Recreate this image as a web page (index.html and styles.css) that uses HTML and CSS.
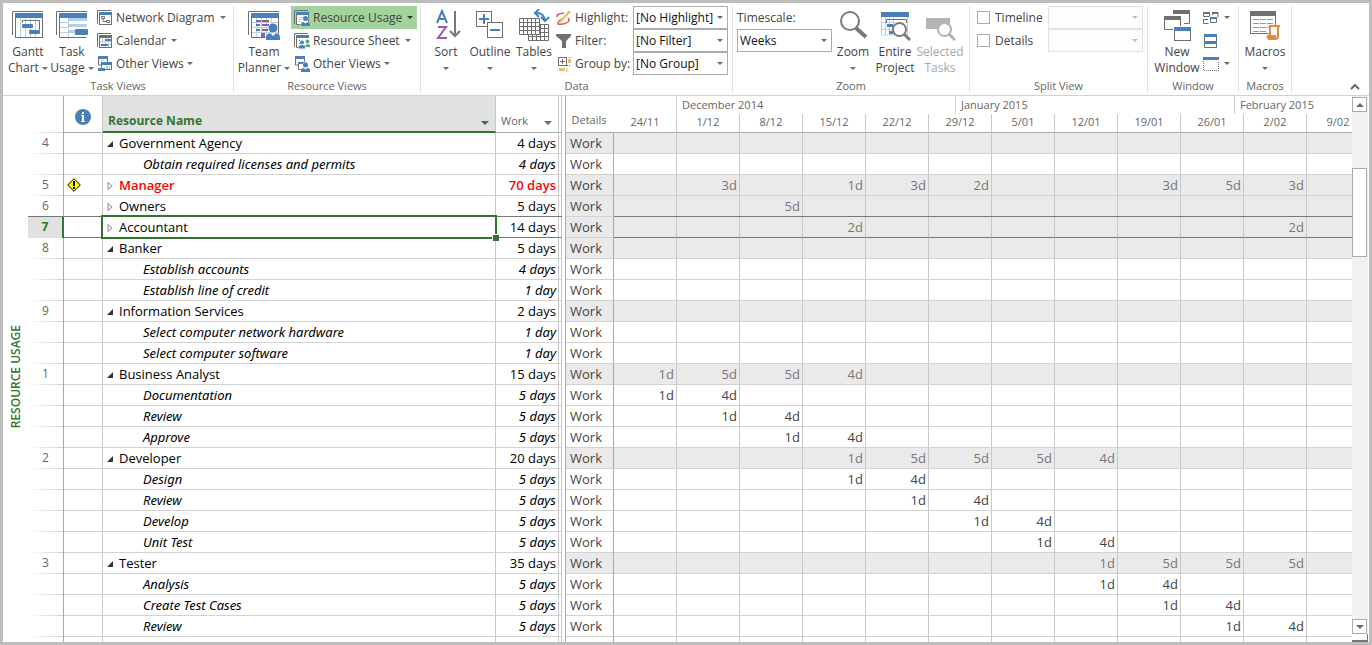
FILE: index.html
```
<!DOCTYPE html>
<html lang="en">
<head>
    <meta charset="UTF-8">
    <meta name="viewport" content="width=device-width, initial-scale=1.0">
    <title>Resource Usage</title>
    <link rel="stylesheet" href="styles.css">
</head>
<body>

<!-- Ribbon -->
<header class="ribbon">
    <section class="group group-task">
        <div class="group-body">
            <button class="big">
                <svg class="icon-lg" viewBox="0 0 32 32">
                    <path class="line" d="M.5 26V2.5H31"/>
                    <path class="grid" d="M8.5 9v19M13.5 9v19M18.5 9v19M23.5 9v19"/>
                    <rect class="line" x="3.5" y="4.5" width="27" height="24"/>
                    <rect class="blue" x="3" y="4" width="28" height="5"/>
                    <path class="line" d="M10.5 14v-2.5h17V21"/>
                    <rect class="blue" x="10" y="15" width="11" height="4" rx="1"/>
                    <rect class="blue" x="17" y="21" width="11" height="4" rx="1"/>
                </svg>
                <span>Gantt</span>
                <span>Chart <i class="arrow"></i></span>
            </button>
            <button class="big">
                <svg class="icon-lg" viewBox="0 0 32 32">
                    <path class="line" d="M.5 26V2.5H31"/>
                    <path class="line" d="M30.5 9V4.5h-27v24h27"/>
                    <rect class="blue" x="3" y="4" width="28" height="5"/>
                    <path class="grid" d="M4 13.5h8M4 18.5h8M4 23.5h8M12.5 9v19"/>
                    <path class="pale" d="M13 9h18v3H13zM13 15h18v3H13zM13 21h6v3h-6z"/>
                    <rect class="blue" x="19" y="20" width="13" height="6" rx="1"/>
                </svg>
                <span>Task</span>
                <span>Usage <i class="arrow"></i></span>
            </button>
            <div class="stack">
                <button class="small">
                    <svg class="icon" viewBox="0 0 16 16">
                        <path class="line" d="M.5 14V.5H14"/>
                        <rect class="line" x="2.5" y="2.5" width="12" height="12"/>
                        <path class="blue" d="M2 2h13v3H2z"/>
                        <path class="line" d="M4.5 6.5h3v2h-3zM9.5 10.5h3v2h-3zM6 9v2.5h3"/>
                    </svg>
                    Network Diagram <i class="arrow arrow-far"></i>
                </button>
                <button class="small">
                    <svg class="icon" viewBox="0 0 16 16">
                        <path class="line" d="M.5 14V.5H14"/>
                        <path class="grid" d="M5.5 5v9M8.5 5v9M11.5 5v9M3 8.5h11M3 11.5h11"/>
                        <rect class="line" x="2.5" y="2.5" width="12" height="12"/>
                        <path class="grey" d="M2 2h13v3H2z"/>
                        <path class="blue" d="M8 6h6v2H8zM4 11h7v2H4z"/>
                    </svg>
                    Calendar <i class="arrow arrow-far"></i>
                </button>
                <button class="small">
                    <svg class="icon" viewBox="0 0 16 16">
                        <path class="line" d="M1.5 3v6H4M10.5 3v3M4.5 9v4.5h10V8"/>
                        <path class="blue" d="M1 0h10v3H1zM4 6h11v3H4zM1 12h7v3H1z"/>
                        <path class="pale" d="M4 4h3v1H4zM9 10h2v3H9zM12 10h1v3h-1z"/>
                    </svg>
                    Other Views <i class="arrow"></i>
                </button>
            </div>
        </div>
        <h2 class="group-title">Task Views</h2>
    </section>

    <section class="group group-resource">
        <div class="group-body">
            <button class="big big-wide">
                <svg class="icon-lg" viewBox="0 0 32 32">
                    <path class="line" d="M.5 26V2.5H31"/>
                    <path class="grid" d="M8.5 9v19M13.5 9v19M18.5 9v19M23.5 9v19M4 13.5h26M4 18.5h26M4 23.5h26"/>
                    <rect class="line" x="3.5" y="4.5" width="27" height="24"/>
                    <rect class="blue" x="3" y="4" width="28" height="5"/>
                    <path class="blue" d="M8 15h4v2H8zM8 20h4v2H8z"/>
                    <path class="purple" d="M8 11h5v2H8zM14 15h7v2h-7zM13 24h4v4h-4z"/>
                    <path class="grey" d="M14 11h7v2h-7zM14 20h6v2h-6z"/>
                    <g class="person">
                        <circle cx="25" cy="19" r="4.5"/>
                        <path d="M18 31v-3q0-3 4-4l3 3 3-3q4 1 4 4v3z"/>
                    </g>
                </svg>
                <span>Team</span>
                <span>Planner <i class="arrow"></i></span>
            </button>
            <div class="stack">
                <button class="small small-inset active">
                    <svg class="icon" viewBox="0 0 16 16">
                        <path class="line" d="M.5 14V.5H14"/>
                        <path class="line paper" d="M2.5 3h12v11.5h-12z"/>
                        <path class="blue" d="M2 2h13v3H2z"/>
                        <path class="grid" d="M4 7.5h5M4 9.5h4M4 11.5h3"/>
                        <g class="person">
                            <circle cx="11.5" cy="8.5" r="2.5"/>
                            <path d="M7 16v-2q0-2 2.5-2l2 1.5 2-1.5Q16 12 16 14v2z"/>
                        </g>
                    </svg>
                    Resource Usage <i class="arrow arrow-far arrow-dark"></i>
                </button>
                <button class="small small-inset">
                    <svg class="icon" viewBox="0 0 16 16">
                        <path class="line" d="M.5 14V.5H14M2.5 3v11.5H5"/>
                        <path class="blue" d="M2 2h13v3H2z"/>
                        <path class="line dots" d="M5 7.5h4M5 10.5h2"/>
                        <g class="person">
                            <circle cx="8" cy="9.5" r="2"/>
                            <path d="M4.5 15.5V14q0-2 3.5-2t3 2v1.5z"/>
                        </g>
                        <g class="green">
                            <circle cx="13.5" cy="8.5" r="2"/>
                            <path d="M11.5 14v-2q2-1.5 4.5 0v2z"/>
                        </g>
                    </svg>
                    Resource Sheet <i class="arrow arrow-far"></i>
                </button>
                <button class="small small-inset">
                    <svg class="icon" viewBox="0 0 16 16">
                        <path class="line" d="M1.5 3v6H4M10.5 3v3M4.5 8v5.5H8"/>
                        <path class="blue" d="M1 0h10v3H1zM4 6h9v2H4z"/>
                        <g class="person">
                            <circle cx="11.5" cy="9" r="2.5"/>
                            <path d="M7 16v-2q0-2 2.5-2l2 1.5 2-1.5Q16 12 16 14v2z"/>
                        </g>
                    </svg>
                    Other Views <i class="arrow"></i>
                </button>
            </div>
        </div>
        <h2 class="group-title">Resource Views</h2>
    </section>

    <section class="group group-data">
        <div class="group-body">
            <button class="big">
                <svg class="icon-lg" viewBox="0 0 32 32">
                    <path class="stroke-blue" d="M7 14l5-12 5 12M9 10h6"/>
                    <path class="stroke-purple" d="M8 18h8L8 29h9"/>
                    <path class="stroke-grey" d="M25 2v25M20 22l5 5 5-5"/>
                </svg>
                <span>Sort</span>
                <span><i class="arrow"></i></span>
            </button>
            <button class="big">
                <svg class="icon-lg" viewBox="0 0 32 32">
                    <rect class="line" x="2.5" y="2.5" width="15" height="15"/>
                    <rect class="line paper" x="13.5" y="13.5" width="15" height="15"/>
                    <path class="stroke-blue" d="M5 10h10M10 5v10M16 21h10"/>
                </svg>
                <span>Outline</span>
                <span><i class="arrow"></i></span>
            </button>
            <button class="big">
                <svg class="icon-lg" viewBox="0 0 32 32">
                    <path class="line" d="M10.5 15.5h20v16h-20zM10 19.5h20M10 23.5h20M10 27.5h20M14.5 16v15M18.5 16v15M22.5 16v15M26.5 16v15"/>
                    <path class="line paper" d="M1.5 9.5h20v16h-20z"/>
                    <path class="line" d="M1 13.5h20M1 17.5h20M1 21.5h20M5.5 10v15M9.5 10v15M13.5 10v15M17.5 10v15"/>
                    <path class="stroke-blue" d="M17 4q9-1 10 8M21 0l-4 4 4 4M23 8l4 4 4-4"/>
                </svg>
                <span>Tables</span>
                <span><i class="arrow"></i></span>
            </button>
            <div class="stack stack-labels">
                <label class="small" for="highlight">
                    <svg class="icon" viewBox="0 0 16 16">
                        <path class="stroke-red" d="M8 3Q0 4 1 7M12 8q2 2 0 4-4 3-10 2 0-3 4-5"/>
                        <path class="stroke-tan" d="M4 12L14 1"/>
                    </svg>
                    Highlight:
                </label>
                <label class="small" for="filter">
                    <svg class="icon" viewBox="0 0 16 16">
                        <path class="grey" d="M0 1h15v2l-5 5v7H6V8L0 3z"/>
                    </svg>
                    Filter:
                </label>
                <label class="small" for="group-by">
                    <svg class="icon" viewBox="0 0 16 16">
                        <rect class="line" x="2.5" y="1.5" width="8" height="8"/>
                        <path class="line" d="M4 5.5h5M6.5 3v5"/>
                        <path class="tan" d="M12 1h4v1h-4zM12 3h3v4h-3zM3 12h6v3H3z"/>
                        <path class="line dots" d="M11 9.5h4M11 12.5v3"/>
                    </svg>
                    Group by:
                </label>
            </div>
            <div class="stack">
                <select class="combo" id="highlight"><option>[No Highlight]</option></select>
                <select class="combo" id="filter"><option>[No Filter]</option></select>
                <select class="combo" id="group-by"><option>[No Group]</option></select>
            </div>
        </div>
        <h2 class="group-title">Data</h2>
    </section>

    <section class="group group-zoom">
        <div class="group-body">
            <div class="stack">
                <label class="small" for="timescale">Timescale:</label>
                <select class="combo" id="timescale"><option>Weeks</option></select>
            </div>
            <button class="big">
                <svg class="icon-lg" viewBox="0 0 32 32">
                    <circle class="lens" cx="13" cy="12" r="9"/>
                    <path class="handle" d="M19 19l10 9"/>
                </svg>
                <span>Zoom</span>
                <span><i class="arrow"></i></span>
            </button>
            <button class="big">
                <svg class="icon-lg" viewBox="0 0 32 32">
                    <path class="grid" d="M2.5 8v18H29M6.5 8v18M10.5 8v18M14.5 8v18M2 13.5h14M2 20.5h14M28.5 8v18"/>
                    <rect class="blue" x="2" y="3" width="28" height="5"/>
                    <path class="line" d="M7.5 14v-3.5h20V14"/>
                    <path class="blue" d="M8 15h6v3H8zM10 22h4v3h-4z"/>
                    <circle class="lens lens-sm" cx="20.5" cy="20.5" r="6.5"/>
                    <path class="handle handle-sm" d="M25 25l6 6"/>
                </svg>
                <span>Entire</span>
                <span>Project</span>
            </button>
            <button class="big big-wide" disabled>
                <svg class="icon-lg" viewBox="0 0 32 32">
                    <path class="off" d="M2 9h24v11H2z"/>
                    <circle class="lens lens-sm lens-off" cx="20.5" cy="20.5" r="6.5"/>
                    <path class="handle handle-sm lens-off" d="M25 25l6 6"/>
                </svg>
                <span>Selected</span>
                <span>Tasks</span>
            </button>
        </div>
        <h2 class="group-title">Zoom</h2>
    </section>

    <section class="group group-split">
        <div class="group-body">
            <div class="stack stack-checks">
                <label class="small"><input class="check" type="checkbox"> Timeline</label>
                <label class="small"><input class="check" type="checkbox"> Details</label>
            </div>
            <div class="stack">
                <select class="combo" aria-label="Timeline view" disabled></select>
                <select class="combo" aria-label="Details view" disabled></select>
            </div>
        </div>
        <h2 class="group-title">Split View</h2>
    </section>

    <section class="group group-window">
        <div class="group-body">
            <button class="big big-wide">
                <svg class="icon-lg" viewBox="0 0 32 32">
                    <path class="line" d="M12.5 5V1.5h16v13H23"/>
                    <path class="grey" d="M12 1h17v4H12z"/>
                    <path class="line paper" d="M3.5 7.5h16v13h-16z"/>
                    <path class="grey" d="M3 7h17v4H3z"/>
                    <path class="paper" d="M12 17h19v15H12z"/>
                    <rect class="line paper" x="13.5" y="18.5" width="16" height="13"/>
                    <path class="blue" d="M13 18h17v4H13z"/>
                </svg>
                <span>New</span>
                <span>Window</span>
            </button>
            <div class="stack">
                <button class="small" aria-label="Switch Windows">
                    <svg class="icon" viewBox="0 0 16 16">
                        <path class="line" d="M.5 6.5v-4h6v4zM9.5 5V2.5H15v5M.5 9v4.5h5M.5 9.5H5M7.5 7.5h6v5h-6z"/>
                        <path class="grey" d="M0 2h7v2H0zM9 2h6v2H9z"/>
                        <path class="blue" d="M7 7h7v2H7z"/>
                    </svg>
                    <i class="arrow"></i>
                </button>
                <button class="small" aria-label="Arrange All">
                    <svg class="icon" viewBox="0 0 16 16">
                        <path class="line" d="M1.5 1.5h12v13h-12z"/>
                        <path class="blue" d="M1 1h13v3H1zM1 8h13v3H1z"/>
                    </svg>
                </button>
                <button class="small" aria-label="Hide">
                    <svg class="icon" viewBox="0 0 16 16">
                        <path class="blue" d="M0 1h16v3H0z"/>
                        <path class="line dots" d="M.5 5v9.5h15V5"/>
                    </svg>
                    <i class="arrow"></i>
                </button>
            </div>
        </div>
        <h2 class="group-title">Window</h2>
    </section>

    <section class="group group-macros">
        <div class="group-body">
            <button class="big">
                <svg class="icon-lg" viewBox="0 0 32 32">
                    <rect class="line" x="1.5" y="3.5" width="25" height="21"/>
                    <path class="grey" d="M1 2h26v5H1z"/>
                    <path class="line dashes" d="M4 10.5h20M4 14.5h20M4 18.5h20M4 22.5h13"/>
                    <path class="scroll paper" d="M21 17h10q-2 0-2 2v8q0 3-3 3h-7q2-1 2-3z"/>
                    <path class="orange" d="M18 26h9v4h-8q-2-1-1-4z"/>
                </svg>
                <span>Macros</span>
                <span><i class="arrow"></i></span>
            </button>
        </div>
        <h2 class="group-title">Macros</h2>
    </section>

    <button class="collapse" aria-label="Collapse the ribbon">
        <svg viewBox="0 0 10 6"><path d="M1 5l4-4 4 4"/></svg>
    </button>
</header>

<!-- Resource Usage view -->
<main class="view">
    <div class="view-name"><span>RESOURCE USAGE</span></div>

    <table class="sheet">
        <colgroup>
            <col class="col-id"><col class="col-info"><col class="col-name"><col class="col-work"><col class="col-end">
        </colgroup>
        <thead>
            <tr>
                <th class="id"></th>
                <th class="info">
                    <svg class="icon" viewBox="0 0 16 16">
                        <circle class="blue" cx="8" cy="8" r="8"/>
                        <path class="info-mark" d="M7 3h2v2H7zM6 6h3v6h1v1H6v-1h1V7H6z"/>
                    </svg>
                </th>
                <th class="name"><div class="head">Resource Name <i class="arrow"></i></div></th>
                <th class="work"><div class="head">Work <i class="arrow"></i></div></th>
                <th class="end"></th>
            </tr>
        </thead>
        <tbody id="sheet-rows"></tbody>
    </table>

    <div class="usage-pane">
        <table class="usage">
            <thead>
                <tr class="months">
                    <th rowspan="2" class="details">Details</th>
                    <th colspan="12">
                        <div class="month-strip">
                            <span class="month month-first"></span>
                            <span class="month">December 2014</span>
                            <span class="month">January 2015</span>
                            <span class="month">February 2015</span>
                        </div>
                    </th>
                </tr>
                <tr class="weeks" id="weeks"></tr>
            </thead>
            <tbody id="usage-rows"></tbody>
        </table>
    </div>

    <div class="scrollbar">
        <button class="scroll-btn" aria-label="Scroll up"><i class="arrow arrow-up"></i></button>
        <div class="track"><div class="thumb"></div></div>
        <button class="scroll-btn" aria-label="Scroll down"><i class="arrow"></i></button>
        <div class="corner"></div>
    </div>
</main>

<script src="script.js"></script>
</body>
</html>
```
FILE: styles.css
```
* {
    box-sizing: border-box;
}

body {
    margin: 0;
    height: 100vh;
    display: flex;
    flex-direction: column;
    border: 3px solid #bdbdbd;
    background: #fff;
    color: #444;
    font: 12px/16px "Open Sans", "Noto Sans", sans-serif;
    overflow: hidden;
}

button,
select {
    font: inherit;
    color: inherit;
}

button {
    padding: 0;
    border: 0;
    background: none;
}

/* Ribbon */
.ribbon {
    display: flex;
    flex: none;
    padding: 3px 0;
    border-bottom: 1px solid #d2d2d2;
}

.group {
    flex: none;
    display: flex;
    flex-direction: column;
    height: 86px;
    border-right: 1px solid #e1e1e1;
}

.group-task { width: 231px; }
.group-resource { width: 187px; }
.group-data { width: 312px; }
.group-zoom { width: 237px; }
.group-split { width: 178px; }
.group-window { width: 91px; }
.group-macros { width: 53px; }

.group-body {
    display: flex;
    flex: 1;
    padding-left: 3px;
}

.group-title {
    margin: 0;
    font-size: 11px;
    font-weight: normal;
    line-height: 12px;
    text-align: center;
    color: #666;
}

.big {
    width: 44px;
    display: flex;
    flex-direction: column;
    align-items: center;
    padding-top: 3px;
    white-space: nowrap;
}

.big-wide { width: 54px; }
.group-zoom .big { width: 42px; }
.group-zoom .big-wide { width: 48px; }
.group-window .big { width: 52px; }
.group-macros .big { width: 46px; }

.big:disabled {
    color: #a8a8a8;
}

.icon-lg {
    width: 32px;
    height: 32px;
    margin-bottom: 3px;
    flex: none;
}

.icon {
    width: 16px;
    height: 16px;
    flex: none;
}

.stack {
    display: flex;
    flex-direction: column;
}

.group-task .stack { padding-left: 3px; }

.group-data .stack-labels {
    width: 77px;
}

.small {
    height: 23px;
    display: flex;
    align-items: center;
    gap: 3px;
    white-space: nowrap;
}

.small-inset {
    padding: 0 4px 0 3px;
}

.active {
    background: #a3d39c;
}

.arrow {
    display: inline-block;
    flex: none;
    border: 3px solid transparent;
    border-top-color: #6a6a6a;
    border-bottom: 0;
    vertical-align: 2px;
}

.arrow-far { margin-left: 2px; }
.arrow-dark { border-top-color: #333; }
.arrow-up { transform: rotate(180deg); }

.combo {
    width: 95px;
    height: 23px;
    padding: 0 2px;
    border: 1px solid #ababab;
    border-radius: 0;
    appearance: none;
    color: #111;
    background: #fff url("data:image/svg+xml,%3Csvg xmlns='http://www.w3.org/2000/svg' width='6' height='3'%3E%3Cpath d='M0 0h6L3 3z' fill='%236a6a6a'/%3E%3C/svg%3E") no-repeat right 4px center;
}

.combo:disabled {
    opacity: 1;
    border-color: #e1e1e1;
    background-color: #fdfdfd;
    background-image: url("data:image/svg+xml,%3Csvg xmlns='http://www.w3.org/2000/svg' width='6' height='3'%3E%3Cpath d='M0 0h6L3 3z' fill='%23c0c0c0'/%3E%3C/svg%3E");
}

.group-zoom .group-body { padding-left: 4px; }
.group-split .group-body { padding-left: 7px; }
.stack-checks { width: 71px; }
.stack-checks .small { gap: 5px; }

.check {
    width: 13px;
    height: 13px;
    margin: 0;
    border: 1px solid #ababab;
    appearance: none;
    background: #fff;
}

.group-window .small { gap: 5px; }

.collapse {
    align-self: flex-end;
    margin: 0 9px 0 auto;
}

.collapse svg {
    display: block;
    width: 10px;
    height: 6px;
    margin-bottom: 2px;
    fill: none;
    stroke: #666;
    stroke-width: 2;
}

/* Icon parts */
.line { fill: none; stroke: #6f6f6f; }
.grid { fill: none; stroke: #b9cfe8; }
.paper { fill: #fff; }
.blue { fill: #4a80ba; }
.pale { fill: #b9cfe8; }
.grey { fill: #707070; }
.purple { fill: #955bb5; }
.green { fill: #5ba283; }
.tan { fill: #e6bd78; }
.orange { fill: #e58a3c; }
.off { fill: #b5b2b5; }
.person { fill: #4a80ba; stroke: #fff; stroke-width: 1; paint-order: stroke; }
.dots { stroke-dasharray: 1 1; }
.dashes { stroke: #999; stroke-dasharray: 6 1; }
.stroke-blue { fill: none; stroke: #4a80ba; stroke-width: 2; }
.stroke-purple { fill: none; stroke: #955bb5; stroke-width: 2; }
.stroke-grey { fill: none; stroke: #777; stroke-width: 2; }
.stroke-red { fill: none; stroke: #dc5b48; stroke-width: 1.5; }
.stroke-tan { fill: none; stroke: #e6bd78; stroke-width: 2.5; }
.scroll { stroke: #e58a3c; stroke-width: 2; }
.lens { fill: #fff; stroke: #7a7a7a; stroke-width: 2; }
.handle { stroke: #7a7a7a; stroke-width: 4; }
.handle-sm { stroke-width: 3; }
.lens-off { stroke: #b5b2b5; }
.info-mark { fill: #fff; }

/* View area */
.view {
    flex: 1;
    min-height: 0;
    display: flex;
    overflow: hidden;
}

.view-name {
    flex: none;
    width: 25px;
    display: flex;
    align-items: center;
    justify-content: center;
    padding-top: 16px;
    font-weight: 600;
    color: #31752f;
}

.view-name span {
    writing-mode: vertical-rl;
    transform: rotate(180deg);
}

table {
    flex: none;
    align-self: flex-start;
    table-layout: fixed;
    border-collapse: separate;
    border-spacing: 0;
}

th,
td {
    height: 21px;
    padding: 0;
    border-right: 1px solid #c8c8c8;
    border-bottom: 1px solid #d2d2d2;
    font-size: 13px;
    line-height: 18px;
    white-space: nowrap;
}

th {
    border-bottom-color: #ababab;
    font-size: 11px;
    font-weight: normal;
    color: #666;
}

.sheet {
    width: 534px;
    color: #000;
}

.col-id { width: 36px; }
.col-info { width: 39px; }
.col-name { width: 393px; }
.col-work { width: 63px; }
.col-end { width: 3px; }

.sheet th {
    height: 37px;
}

.head {
    display: flex;
    align-items: center;
    justify-content: space-between;
    padding: 14px 6px 0 5px;
}

.head .arrow,
.scroll-btn .arrow {
    border-width: 4px 4px 0;
}

.head .arrow {
    margin-top: 4px;
}

.sheet th.name {
    border-bottom: 2px solid #31752f;
    background: #e1e1e1;
    font-size: 12px;
    font-weight: bold;
    color: #31752f;
}

th.name .arrow { border-top-color: #31752f; }

th.info .icon {
    display: block;
    margin: 6px auto 0;
}

/* row rules fade out towards the view name */
.id {
    border-right-color: #ababab;
    border-bottom: 0;
    background: linear-gradient(to right, #fff, #d2d2d2) bottom / 100% 1px no-repeat;
    font-size: 12px;
    text-align: center;
    color: #666;
}

td.id {
    padding-bottom: 2px;
}

td.info svg {
    display: block;
    width: 14px;
    height: 14px;
    margin-left: 3px;
}

.name {
    text-align: left;
}

.twisty {
    display: inline-block;
    width: 6px;
    height: 8px;
    margin: 0 6px 0 4px;
}

.task .name { padding-left: 40px; }

.task .name,
.task .work {
    font-family: "Noto Sans", "Open Sans", sans-serif;
    font-style: italic;
}

td.work {
    padding-right: 2px;
    text-align: right;
}

.over .name,
.over .work {
    font-weight: 600;
    color: #f00;
}

.selected td:not(.label) {
    border-bottom-color: #777;
    box-shadow: 0 -1px #777;
}

.selected .id {
    border-right: 2px solid #31752f;
    background: #e1e1e1;
    font-weight: bold;
    color: #31752f;
}

.selected .name {
    position: relative;
}

.selected .name::before {
    content: "";
    position: absolute;
    inset: -2px;
    border: 2px solid #31752f;
}

.selected .name::after {
    content: "";
    position: absolute;
    right: -4px;
    bottom: -4px;
    width: 6px;
    height: 6px;
    border: solid #fff;
    border-width: 1px 0 0 1px;
    background: #31752f;
}

.usage-pane {
    flex: 1;
    min-width: 0;
    margin-left: 3px;
    border-left: 1px solid #ababab;
    overflow: hidden;
}

.usage {
    width: 804px;
}

.usage .details {
    width: 48px;
    height: 37px;
    padding: 12px 2px 0 0;
    border-right-color: #c8c8c8;
}

.usage .label {
    padding-left: 4px;
    border-right-color: #ababab;
    color: #444;
}

.usage .months th {
    border-right: 0;
}

.usage .months th:last-child {
    height: 18px;
    border-bottom: 0;
}

.month-strip {
    display: flex;
    overflow: hidden;
}

.month {
    flex: none;
    width: 279px;
    height: 18px;
    padding-left: 5px;
    border-left: 1px solid #d2d2d2;
    text-align: left;
}

.month-first {
    width: 62px;
    border-left: 0;
}

.weeks th {
    height: 19px;
    padding-bottom: 3px;
    line-height: 14px;
}

.usage td {
    padding-right: 2px;
    text-align: right;
}

.usage td.label {
    text-align: left;
}

.usage .resource {
    background: #eaeaea;
    color: #777;
}

/* Scrollbar */
.scrollbar {
    flex: none;
    width: 16px;
    display: flex;
    flex-direction: column;
    margin-right: 1px;
    padding-top: 1px;
    background: #f1f1f1;
}

.scroll-btn {
    flex: none;
    width: 15px;
    height: 15px;
    display: flex;
    align-items: center;
    justify-content: center;
    border: 1px solid #ababab;
    background: #fff;
}

.track {
    flex: 1;
    padding-top: 56px;
}

.thumb {
    width: 15px;
    height: 89px;
    border: 1px solid #ababab;
    background: #fff;
}

.corner {
    height: 8px;
    border-right: 1px solid #777;
    border-bottom: 2px solid #777;
    background: #fff;
}
```
FILE: script.js
```
// id, name, work, first week index, values per week
// rows without an id are assignments of the resource above
const rows = [
    { id: 4, name: 'Government Agency', work: '4 days', open: true },
    { name: 'Obtain required licenses and permits', work: '4 days' },
    { id: 5, name: 'Manager', work: '70 days', over: true, week: 1, use: ['3d', '', '1d', '3d', '2d', '', '', '3d', '5d', '3d'] },
    { id: 6, name: 'Owners', work: '5 days', week: 2, use: ['5d'] },
    { id: 7, name: 'Accountant', work: '14 days', selected: true, week: 3, use: ['2d', '', '', '', '', '', '', '2d'] },
    { id: 8, name: 'Banker', work: '5 days', open: true },
    { name: 'Establish accounts', work: '4 days' },
    { name: 'Establish line of credit', work: '1 day' },
    { id: 9, name: 'Information Services', work: '2 days', open: true },
    { name: 'Select computer network hardware', work: '1 day' },
    { name: 'Select computer software', work: '1 day' },
    { id: 1, name: 'Business Analyst', work: '15 days', open: true, week: 0, use: ['1d', '5d', '5d', '4d'] },
    { name: 'Documentation', work: '5 days', week: 0, use: ['1d', '4d'] },
    { name: 'Review', work: '5 days', week: 1, use: ['1d', '4d'] },
    { name: 'Approve', work: '5 days', week: 2, use: ['1d', '4d'] },
    { id: 2, name: 'Developer', work: '20 days', open: true, week: 3, use: ['1d', '5d', '5d', '5d', '4d'] },
    { name: 'Design', work: '5 days', week: 3, use: ['1d', '4d'] },
    { name: 'Review', work: '5 days', week: 4, use: ['1d', '4d'] },
    { name: 'Develop', work: '5 days', week: 5, use: ['1d', '4d'] },
    { name: 'Unit Test', work: '5 days', week: 6, use: ['1d', '4d'] },
    { id: 3, name: 'Tester', work: '35 days', open: true, week: 7, use: ['1d', '5d', '5d', '5d'] },
    { name: 'Analysis', work: '5 days', week: 7, use: ['1d', '4d'] },
    { name: 'Create Test Cases', work: '5 days', week: 8, use: ['1d', '4d'] },
    { name: 'Review', work: '5 days', week: 9, use: ['1d', '4d'] },
    { name: '', work: '' }
];

const weeks = ['24/11', '1/12', '8/12', '15/12', '22/12', '29/12', '5/01', '12/01', '19/01', '26/01', '2/02', '9/02'];

const opened = '<svg class="twisty" viewBox="0 0 6 8"><path d="M6 1v6H0z" fill="#333"/></svg>';
const closed = '<svg class="twisty" viewBox="0 0 6 8"><path d="M1 .5v7L5 4z" fill="#fff" stroke="#888"/></svg>';
const warning = '<svg viewBox="0 0 14 14"><path d="M7 .7L13.3 7 7 13.3.7 7z" fill="#ff0" stroke="#000"/><path d="M6 3h2v5H6zM6 9h2v2H6z"/></svg>';

document.getElementById('weeks').innerHTML = weeks.map(w => `<th>${w}</th>`).join('');

document.getElementById('sheet-rows').innerHTML = rows.map(r => {
    const cls = [r.id ? 'resource' : 'task', r.over ? 'over' : '', r.selected ? 'selected' : ''].join(' ').trim();
    const twisty = r.id ? (r.open ? opened : closed) : '';
    return `<tr class="${cls}">
        <td class="id">${r.id || ''}</td>
        <td class="info">${r.over ? warning : ''}</td>
        <td class="name">${twisty}${r.name}</td>
        <td class="work">${r.work}</td>
        <td class="end"></td>
    </tr>`;
}).join('');

document.getElementById('usage-rows').innerHTML = rows.map(r => {
    const cls = [r.id ? 'resource' : 'task', r.selected ? 'selected' : ''].join(' ').trim();
    const cells = weeks.map((w, i) => `<td>${(r.use && r.use[i - r.week]) || ''}</td>`).join('');
    return `<tr class="${cls}"><td class="label">${r.name ? 'Work' : ''}</td>${cells}</tr>`;
}).join('');
```
